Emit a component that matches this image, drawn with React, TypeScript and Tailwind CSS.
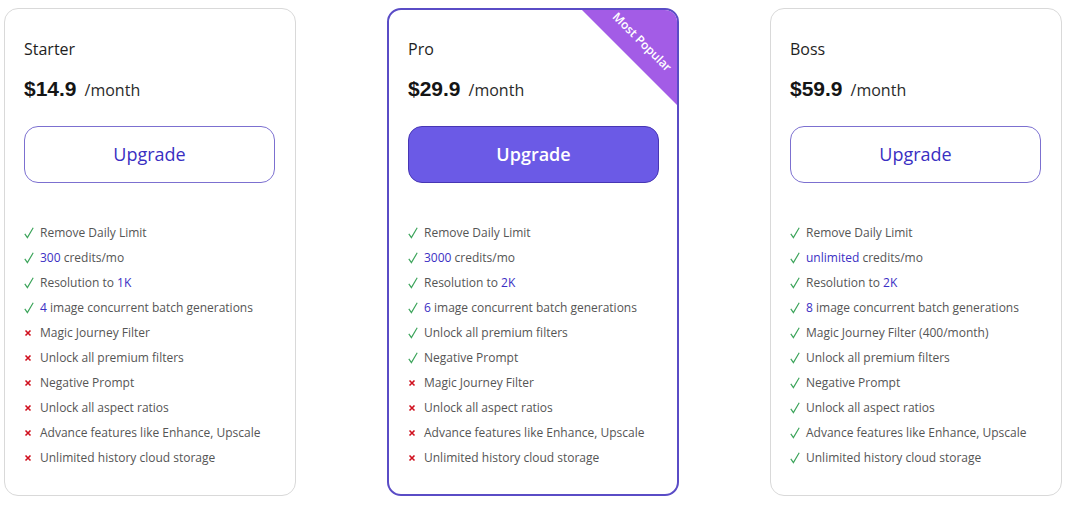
import React from "react";

type Feature = { ok: boolean; pre?: string; hl?: string; text: string };

const plans: { name: string; price: string; popular?: boolean; features: Feature[] }[] = [
  {
    name: "Starter",
    price: "$14.9",
    features: [
      { ok: true, text: "Remove Daily Limit" },
      { ok: true, hl: "300", text: " credits/mo" },
      { ok: true, pre: "Resolution to ", hl: "1K", text: "" },
      { ok: true, hl: "4", text: " image concurrent batch generations" },
      { ok: false, text: "Magic Journey Filter" },
      { ok: false, text: "Unlock all premium filters" },
      { ok: false, text: "Negative Prompt" },
      { ok: false, text: "Unlock all aspect ratios" },
      { ok: false, text: "Advance features like Enhance, Upscale" },
      { ok: false, text: "Unlimited history cloud storage" },
    ],
  },
  {
    name: "Pro",
    price: "$29.9",
    popular: true,
    features: [
      { ok: true, text: "Remove Daily Limit" },
      { ok: true, hl: "3000", text: " credits/mo" },
      { ok: true, pre: "Resolution to ", hl: "2K", text: "" },
      { ok: true, hl: "6", text: " image concurrent batch generations" },
      { ok: true, text: "Unlock all premium filters" },
      { ok: true, text: "Negative Prompt" },
      { ok: false, text: "Magic Journey Filter" },
      { ok: false, text: "Unlock all aspect ratios" },
      { ok: false, text: "Advance features like Enhance, Upscale" },
      { ok: false, text: "Unlimited history cloud storage" },
    ],
  },
  {
    name: "Boss",
    price: "$59.9",
    features: [
      { ok: true, text: "Remove Daily Limit" },
      { ok: true, hl: "unlimited", text: " credits/mo" },
      { ok: true, pre: "Resolution to ", hl: "2K", text: "" },
      { ok: true, hl: "8", text: " image concurrent batch generations" },
      { ok: true, text: "Magic Journey Filter (400/month)" },
      { ok: true, text: "Unlock all premium filters" },
      { ok: true, text: "Negative Prompt" },
      { ok: true, text: "Unlock all aspect ratios" },
      { ok: true, text: "Advance features like Enhance, Upscale" },
      { ok: true, text: "Unlimited history cloud storage" },
    ],
  },
];

const Check = () => (
  <svg width="10" height="12" viewBox="0 0 10 12" className="shrink-0">
    <path d="M0.8 6.8 L3.4 10.6 L9.2 0.8" fill="none" stroke="#3ea55c" strokeWidth="1.2" />
  </svg>
);

const Cross = () => (
  <svg width="10" height="12" viewBox="0 0 10 12" className="shrink-0">
    <path d="M1.5 3.5 L6.5 8.5 M6.5 3.5 L1.5 8.5" fill="none" stroke="#d0101e" strokeWidth="1.6" />
  </svg>
);

const App = () => {
  return (
    <div
      className="w-[1070px] h-[506px] bg-white flex gap-[91px] pl-[4px] pt-[8px]"
      style={{ fontFamily: '"Open Sans", "Liberation Sans", sans-serif' }}
    >
      {plans.map((p) => (
        <div
          key={p.name}
          className={`relative overflow-hidden w-[292px] h-[488px] rounded-[14px] bg-white ${
            p.popular ? "border-2 border-[#5a4cc6] px-[19px] pt-[27px]" : "border border-[#d9d9d9] px-[19px] pt-[28px]"
          }`}
        >
          {p.popular && (
            <>
              <div className="absolute right-0 top-0 w-[95px] h-[95px] bg-[#a35ce6] [clip-path:polygon(0_0,100%_0,100%_100%)]" />
              <div className="absolute right-[-15px] top-[26px] w-[100px] rotate-45 text-center text-[12px] font-semibold text-white leading-none">
                Most Popular
              </div>
            </>
          )}
          <div className="text-[16px] leading-[24px] text-[#1e1e1e]">{p.name}</div>
          <div className="mt-[12px] flex items-baseline h-[28px]">
            <span
              className="text-[21px] font-bold text-[#151515]"
              style={{ fontFamily: '"Liberation Sans", sans-serif' }}
            >
              {p.price}
            </span>
            <span
              className="ml-[8px] text-[16px] text-[#2a2a2a]"
              style={{ fontFamily: '"Open Sans", sans-serif' }}
            >
              /month
            </span>
          </div>
          <div
            className={`mt-[25px] h-[57px] w-[251px] rounded-[14px] flex items-center justify-center text-[18px] ${
              p.popular
                ? "bg-[#6b5ae6] border border-[#4736b4] text-white font-semibold"
                : "border border-[#7c70d0] text-[#3a2fc2]"
            }`}
          >
            Upgrade
          </div>
          <div className="mt-[37px] flex flex-col">
            {p.features.map((f, i) => (
              <div key={i} className="h-[25px] flex items-center gap-[6px] text-[12px] text-[#555]">
                {f.ok ? <Check /> : <Cross />}
                <span className="whitespace-nowrap">
                  {f.pre}
                  {f.hl && <span className="text-[#3b30c4]">{f.hl}</span>}
                  {f.text}
                </span>
              </div>
            ))}
          </div>
        </div>
      ))}
    </div>
  );
};

export default App;
